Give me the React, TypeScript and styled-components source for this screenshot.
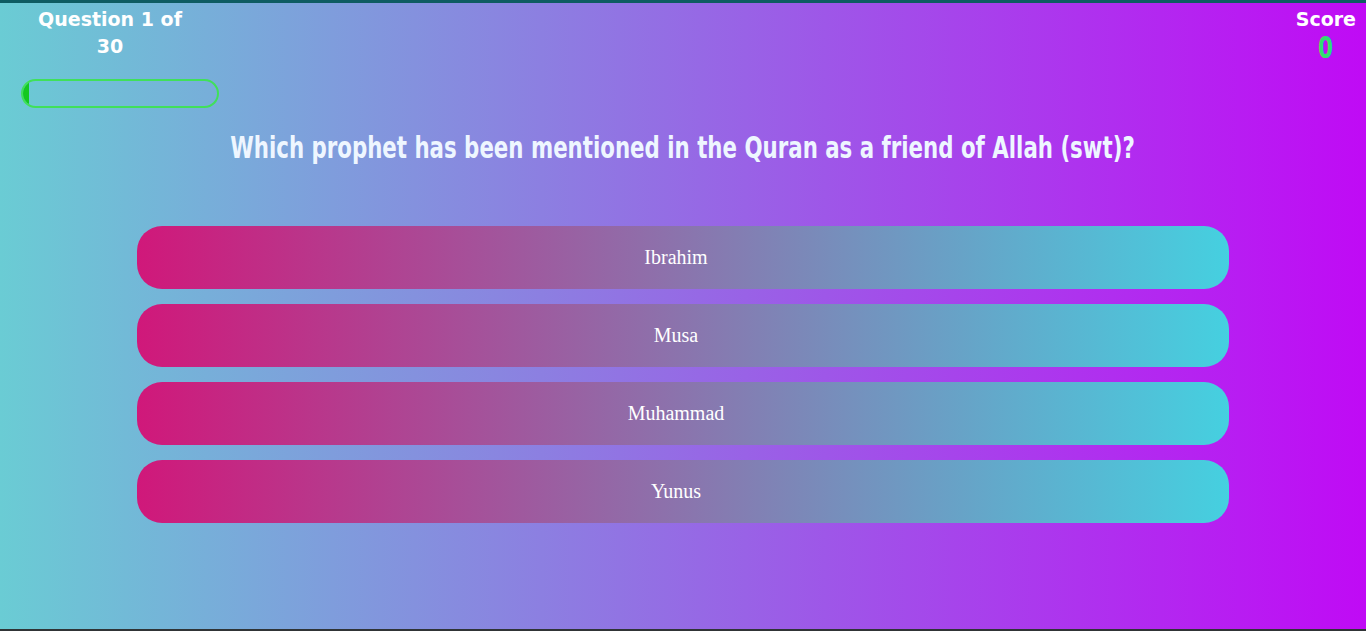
import React from 'react'
import styled, { createGlobalStyle } from 'styled-components'

interface IQuiz {
  question: string
  answers: string[]
  current: number
  total: number
  score: number
}

const quiz: IQuiz = {
  question: 'Which prophet has been mentioned in the Quran as a friend of Allah (swt)?',
  answers: ['Ibrahim', 'Musa', 'Muhammad', 'Yunus'],
  current: 1,
  total: 30,
  score: 0
}

const GlobalStyle = createGlobalStyle`
  html, body {
    margin: 0;
    padding: 0;
    overflow: hidden;
  }
  body {
    font-family: "Liberation Serif", serif;
  }
`

const Page = styled.div`
  display: flex;
  flex-direction: column;
  height: 631px;
  border-top: 3px solid #0e5c62;
  box-sizing: border-box;
  background: linear-gradient(to right, #6accd4, #c00af5);
`

const Main = styled.main`
  flex: 1;
  display: flex;
  flex-direction: column;
`

const Header = styled.header`
  display: flex;
  justify-content: space-between;
  align-items: flex-start;
  padding: 3px 10px 0 10px;
`

const Tracker = styled.div`
  width: 200px;
`

const Stat = styled.div`
  display: flex;
  flex-direction: column;
  align-items: center;
`

const StatLabel = styled.p<{ $width?: number }>`
  margin: 0;
  width: ${p => (p.$width ? `${p.$width}px` : 'auto')};
  font-family: "DejaVu Sans", "Liberation Sans", sans-serif;
  font-weight: 700;
  font-size: 19px;
  line-height: 27px;
  text-align: center;
  color: #ffffff;
`

const ScoreValue = styled.span`
  display: inline-block;
  font-family: "DejaVu Sans Condensed", "DejaVu Sans", sans-serif;
  font-stretch: condensed;
  font-weight: 700;
  font-size: 30px;
  line-height: 30px;
  color: #2fe070;
  transform: scaleX(0.8);
`

const Progress = styled.div`
  width: 198px;
  height: 29px;
  margin: 19px 0 0 11px;
  box-sizing: border-box;
  border: 2px solid #40e05a;
  border-radius: 15px;
  overflow: hidden;
`

const ProgressFill = styled.div`
  height: 100%;
  background: #14c820;
`

const QuestionRow = styled.div`
  margin-top: 20px;
  text-align: center;
`

const Question = styled.h1`
  display: inline-block;
  margin: 0;
  font-family: "DejaVu Sans Condensed", "DejaVu Sans", sans-serif;
  font-stretch: condensed;
  font-weight: 700;
  font-size: 30px;
  line-height: 40px;
  white-space: nowrap;
  color: #eef6ff;
  transform: scaleX(0.79);
`

const Answers = styled.ul`
  list-style: none;
  width: 80%;
  margin: 58px auto 0;
  padding: 0;
  display: flex;
  flex-direction: column;
  gap: 15px;
`

const AnswerButton = styled.button`
  display: flex;
  align-items: center;
  justify-content: center;
  width: 100%;
  height: 63px;
  padding: 0 14px 0 0;
  border: none;
  border-radius: 25px;
  background: linear-gradient(to right, #d0187a, #45d0e0);
  font-family: "Liberation Serif", serif;
  font-size: 20px;
  color: #ffffff;
  cursor: pointer;
`

const Footer = styled.div`
  height: 2px;
  background: #303436;
`

const App: React.FC = () => {
  const { question, answers, current, total, score } = quiz
  const pct = (current / total) * 100

  return (
    <>
      <GlobalStyle />
      <Page>
        <Main>
          <Header>
            <Tracker>
              <Stat>
                <StatLabel $width={160}>
                  Question {current} of {total}
                </StatLabel>
              </Stat>
              <Progress>
                <ProgressFill style={{ width: `${pct}%` }} />
              </Progress>
            </Tracker>
            <Stat>
              <StatLabel>Score</StatLabel>
              <ScoreValue>{score}</ScoreValue>
            </Stat>
          </Header>

          <QuestionRow>
            <Question>{question}</Question>
          </QuestionRow>

          <Answers>
            {answers.map(a => (
              <li key={a}>
                <AnswerButton>{a}</AnswerButton>
              </li>
            ))}
          </Answers>
        </Main>
        <Footer />
      </Page>
    </>
  )
}

export default App
